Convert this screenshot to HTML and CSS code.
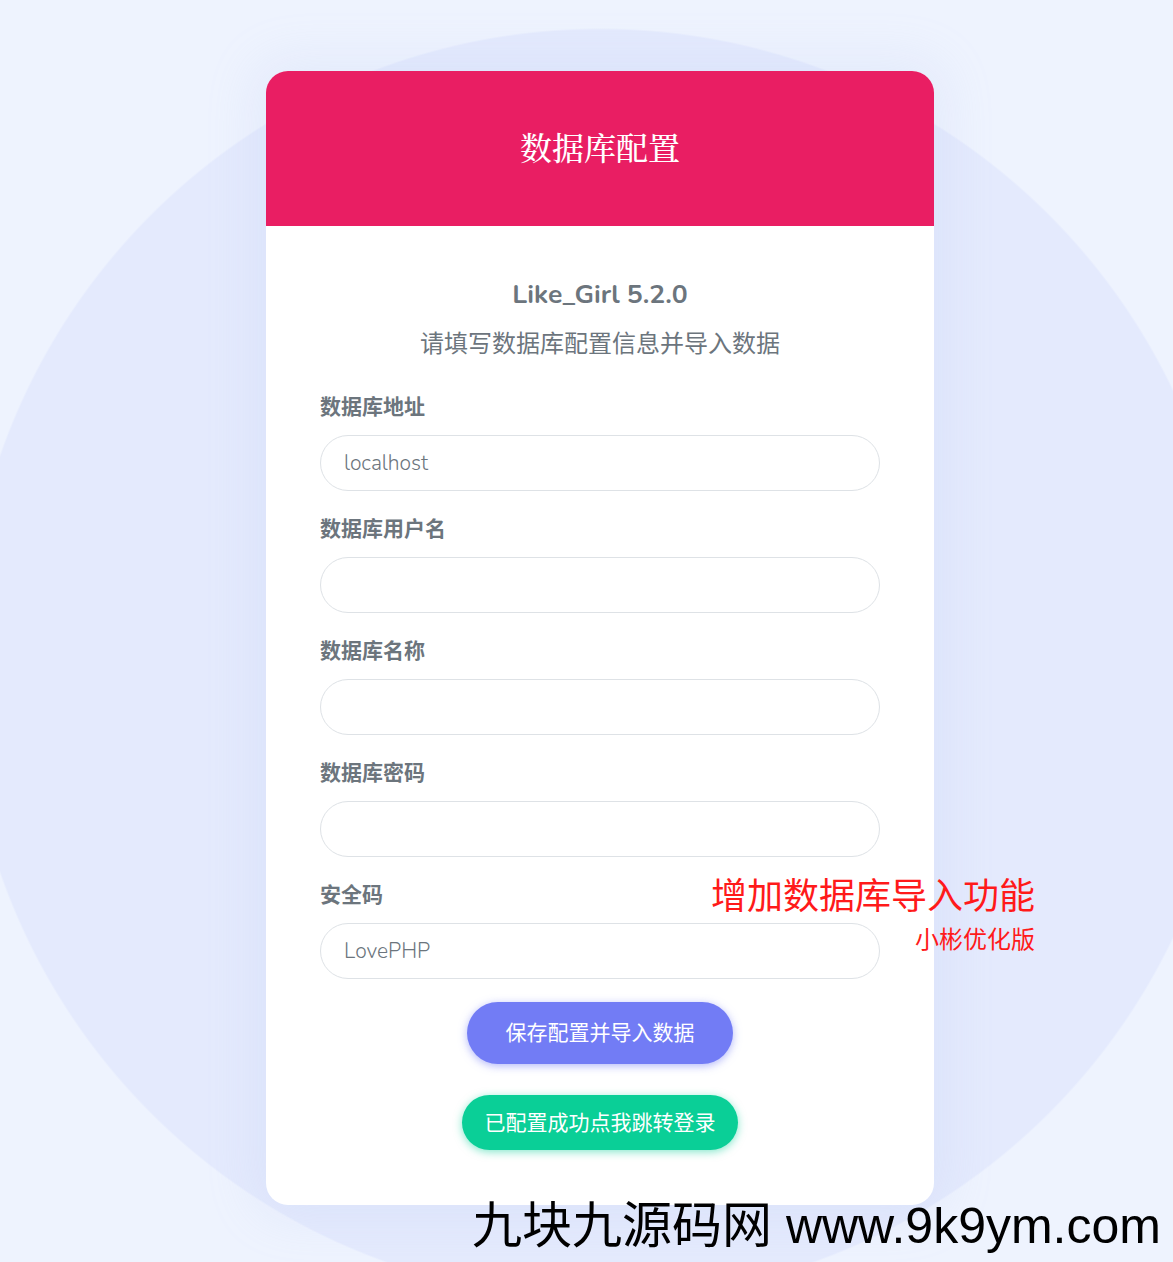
FILE: index.html
```html
<!DOCTYPE html>
<html lang="zh-CN">
<head>
<meta charset="utf-8">
<title>数据库配置</title>
<link rel="stylesheet" href="styles.css">
</head>
<body>
<div class="page">
  <div class="card">
    <div class="card-header">
      <h1 class="header-title">数据库配置</h1>
    </div>
    <div class="card-body">
      <h2 class="app-title">Like_Girl 5.2.0</h2>
      <p class="app-sub">请填写数据库配置信息并导入数据</p>
      <form class="form">
        <div class="group">
          <label class="label">数据库地址</label>
          <div class="input"><span class="val">localhost</span></div>
        </div>
        <div class="group">
          <label class="label">数据库用户名</label>
          <div class="input"></div>
        </div>
        <div class="group">
          <label class="label">数据库名称</label>
          <div class="input"></div>
        </div>
        <div class="group">
          <label class="label">数据库密码</label>
          <div class="input"></div>
        </div>
        <div class="group group-last">
          <label class="label">安全码</label>
          <div class="input"><span class="val">LovePHP</span></div>
        </div>
        <div class="actions">
          <button type="button" class="btn btn-primary">保存配置并导入数据</button>
          <button type="button" class="btn btn-success">已配置成功点我跳转登录</button>
        </div>
      </form>
    </div>
  </div>
  <div class="note">
    <div class="note-main">增加数据库导入功能</div>
    <div class="note-sub">小彬优化版</div>
  </div>
  <div class="watermark">九块九源码网 www.9k9ym.com</div>
</div>
</body>
</html>
```

FILE: styles.css
```css
html, body {
  margin: 0;
  padding: 0;
  height: 100%;
  overflow: hidden;
}
body {
  background: radial-gradient(circle 636px at 600px 664px, #e4eafd 99.7%, #eef3fe 100%);
  background-color: #eef3fe;
  font-family: "Nunito", "Lato", "Noto Sans CJK SC", sans-serif;
  color: #6c757d;
}
.page {
  position: relative;
  height: 1262px;
  padding: 71px 0 0 266px;
  box-sizing: border-box;
}
.card {
  width: 668px;
  background: #fff;
  border-radius: 22px;
  overflow: hidden;
  box-shadow: 0 0 50px 10px rgba(180, 195, 240, 0.18);
}
.card-header {
  height: 155px;
  box-sizing: border-box;
  padding-bottom: 6px;
  background: #e91e63;
  display: flex;
  align-items: center;
  justify-content: center;
}
.header-title {
  margin: 0;
  color: #fff;
  font-family: "Noto Serif CJK SC", "AR PL UMing CN", serif;
  font-size: 32px;
  font-weight: 500;
  line-height: 1;
}
.card-body {
  padding: 49px 54px 55px;
  text-align: center;
}
.app-title {
  margin: 0;
  font-size: 26.5px;
  font-weight: 700;
  line-height: 38px;
  color: #6c757d;
}
.app-sub {
  margin: 12px 0 0;
  font-family: "Noto Sans CJK SC", sans-serif;
  font-size: 24px;
  line-height: 33px;
  color: #6c757d;
}
.form {
  margin-top: 32px;
  text-align: left;
}
.group {
  display: flex;
  flex-direction: column;
  margin-bottom: 21px;
}
.group-last {
  margin-bottom: 23px;
}
.label {
  font-family: "Noto Sans CJK SC", sans-serif;
  font-size: 21px;
  font-weight: 700;
  line-height: 30px;
  color: #6c757d;
  margin-bottom: 15px;
}
.input {
  height: 56px;
  box-sizing: border-box;
  border: 1px solid #dee2e6;
  border-radius: 28px;
  padding: 0 23px;
  display: flex;
  align-items: center;
  background: #fff;
}
.val {
  font-family: "Nunito", "Lato", sans-serif;
  font-size: 21px;
  font-weight: 300;
  color: #6c757d;
}
.actions {
  display: flex;
  flex-direction: column;
  align-items: center;
  gap: 31px;
}
.btn {
  border: none;
  color: #fff;
  font-family: "Noto Sans CJK SC", sans-serif;
  font-size: 21px;
  font-weight: 400;
  line-height: 30px;
  padding: 0 0 4px;
  cursor: pointer;
}
.btn-primary {
  width: 266px;
  height: 62px;
  border-radius: 31px;
  background: #727cf5;
  box-shadow: 0 2px 8px rgba(114, 124, 245, 0.55);
}
.btn-success {
  width: 276px;
  height: 55px;
  border-radius: 28px;
  background: #0acf97;
  box-shadow: 0 2px 8px rgba(10, 207, 151, 0.5);
}
.note {
  position: absolute;
  right: 138px;
  top: 871px;
  text-align: right;
  color: #ff1a1a;
  font-family: "Noto Sans CJK SC", sans-serif;
}
.note-main {
  font-size: 36px;
  line-height: 44px;
}
.note-sub {
  font-size: 24px;
  line-height: 30px;
  margin-top: 8px;
}
.watermark {
  position: absolute;
  left: 472px;
  top: 1194px;
  font-family: "Liberation Sans", "Noto Sans CJK SC", sans-serif;
  font-size: 50px;
  line-height: 64px;
  color: #000;
  white-space: nowrap;
}
```
